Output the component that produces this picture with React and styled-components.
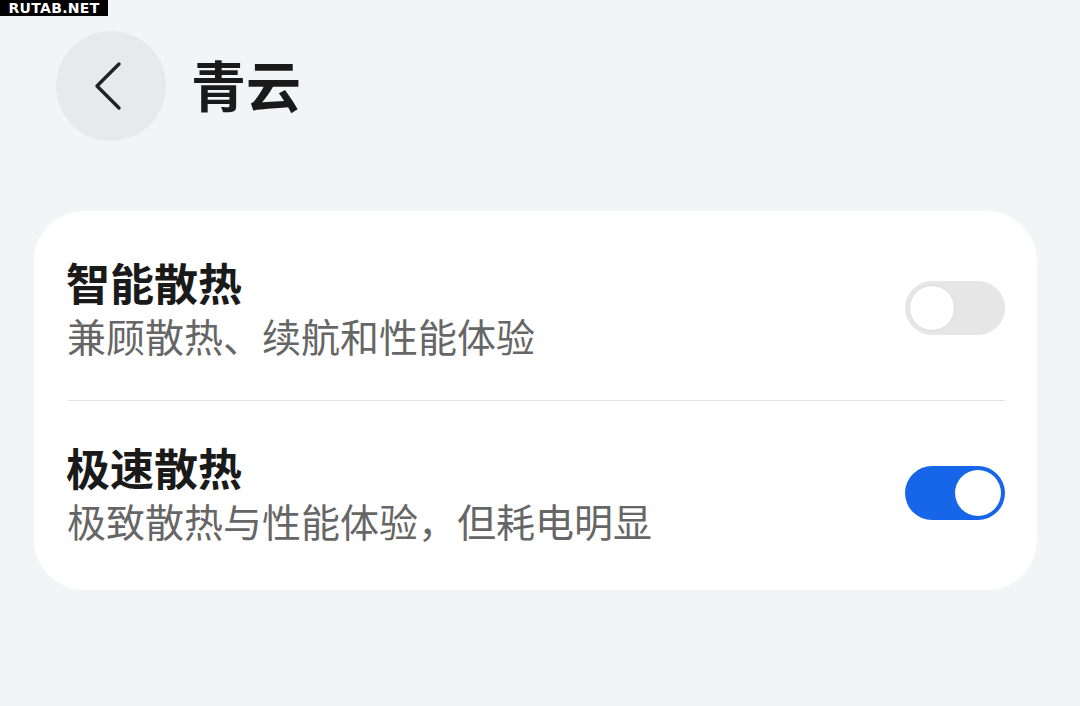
import { createGlobalStyle } from "styled-components";
import styled from "styled-components";

const GlobalStyle = createGlobalStyle`
  html, body {
    margin: 0;
    padding: 0;
    background: #f3f4f6;
  }
  body {
    font-family: "Noto Sans CJK SC", "Noto Sans", sans-serif;
    width: 1080px;
    height: 706px;
    overflow: hidden;
  }
`;

function Toggle({ on }) {
  return (
    <Track $on={on}>
      <Knob $on={on} />
    </Track>
  );
}

const rows = [
  { title: "智能散热", desc: "兼顾散热、续航和性能体验", on: false },
  { title: "极速散热", desc: "极致散热与性能体验，但耗电明显", on: true },
];

export default function App() {
  return (
    <>
      <GlobalStyle />
      <Page>
        <Watermark>RUTAB.NET</Watermark>
        <Header>
          <BackButton>
            <svg width="30" height="50" viewBox="0 0 30 50">
              <path
                d="M25 3 L3 25 L25 47"
                fill="none"
                stroke="#222"
                strokeWidth="3.4"
                strokeLinecap="round"
                strokeLinejoin="round"
              />
            </svg>
          </BackButton>
          <Title>青云</Title>
        </Header>
        <Card>
          {rows.map((r, i) => (
            <div key={r.title}>
              {i > 0 && <Divider />}
              <Row>
                <TextWrap>
                  <RowTitle>{r.title}</RowTitle>
                  <RowDesc>{r.desc}</RowDesc>
                </TextWrap>
                <Toggle on={r.on} />
              </Row>
            </div>
          ))}
        </Card>
      </Page>
    </>
  );
}

const Page = styled.div`
  position: relative;
  display: flex;
  flex-direction: column;
  padding-top: 31px;
`;

const Watermark = styled.div`
  position: absolute;
  top: 0;
  left: 0;
  width: 108px;
  height: 16px;
  background: #000;
  color: #fff;
  font-family: "DejaVu Sans", sans-serif;
  font-weight: 700;
  font-size: 14px;
  line-height: 16px;
  text-align: center;
  letter-spacing: 0.3px;
`;

const Header = styled.div`
  display: flex;
  align-items: center;
  gap: 25px;
  padding-left: 56px;
  height: 110px;
`;

const BackButton = styled.div`
  width: 110px;
  height: 110px;
  border-radius: 50%;
  background: #e8e9eb;
  display: flex;
  align-items: center;
  justify-content: center;
  padding-right: 4px;
  box-sizing: border-box;
`;

const Title = styled.h1`
  margin: 0;
  font-size: 55px;
  font-weight: 700;
  color: #1a1a1a;
  line-height: 1;
  padding-bottom: 6px;
`;

const Card = styled.div`
  margin: 70px 0 0 34px;
  width: 1003px;
  box-sizing: border-box;
  background: #fff;
  border-radius: 50px;
  padding: 5px 32px 5px 34px;
`;

const Row = styled.div`
  display: flex;
  align-items: center;
  justify-content: space-between;
  padding: 39px 0;
`;

const TextWrap = styled.div`
  display: flex;
  flex-direction: column;
`;

const RowTitle = styled.div`
  font-size: 44px;
  font-weight: 700;
  line-height: 54px;
  color: #1a1a1a;
  margin-left: -2px;
`;

const RowDesc = styled.div`
  font-size: 39px;
  line-height: 52px;
  color: #666;
  margin-left: -1px;
`;

const Divider = styled.div`
  height: 1px;
  background: #e2e2e2;
`;

const Track = styled.div`
  width: 100px;
  height: 54px;
  border-radius: 27px;
  box-sizing: border-box;
  padding: 4px;
  display: flex;
  justify-content: ${(p) => (p.$on ? "flex-end" : "flex-start")};
  align-items: center;
  background: ${(p) => (p.$on ? "#1765e8" : "#e6e6e6")};
  flex-shrink: 0;
`;

const Knob = styled.div`
  width: 46px;
  height: 46px;
  border-radius: 50%;
  background: #fff;
  box-sizing: border-box;
  border: ${(p) => (p.$on ? "none" : "1.5px solid #dcdcdc")};
`;
